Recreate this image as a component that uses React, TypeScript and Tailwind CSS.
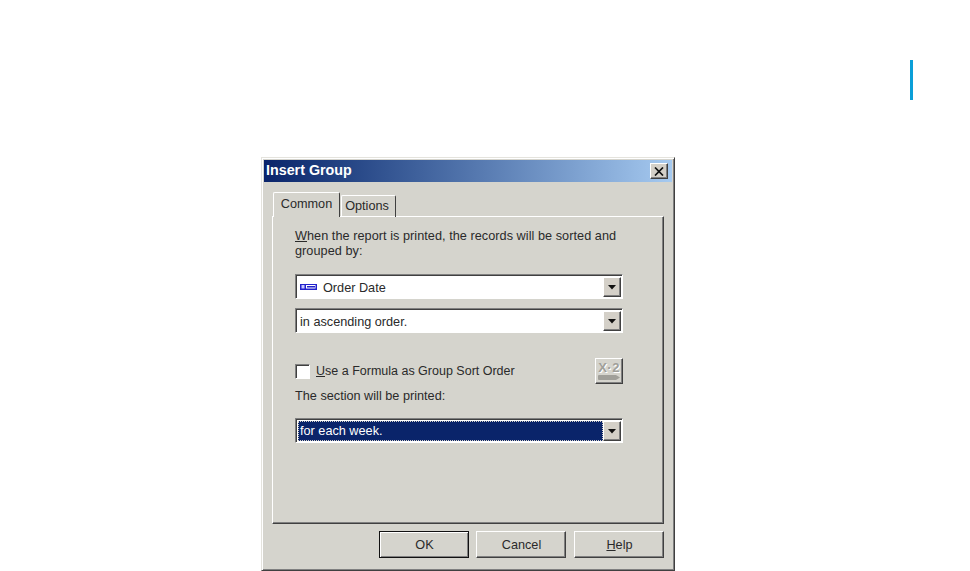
import React from 'react';

const raised = 'border border-t-white border-l-white border-r-[#404040] border-b-[#404040] shadow-[inset_-1px_-1px_0_#808080]';

const Combo: React.FC<{ children: React.ReactNode; selected?: boolean; className?: string }> = ({ children, selected, className }) => (
  <div className={`flex h-[25px] w-[328px] items-stretch border border-t-[#808080] border-l-[#808080] border-r-white border-b-white shadow-[inset_1px_1px_0_#404040] pt-[2px] pl-[2px] pb-px pr-px bg-white ${className ?? ''}`}>
    <div className={`flex min-w-0 flex-1 items-center ${selected ? 'bg-[#0a246a] text-white outline-1 -outline-offset-1 outline-dotted outline-[#d4d0c8]' : ''}`}>
      {children}
    </div>
    <div className={`flex w-[18px] items-center justify-center bg-[#d4d0c8] ${raised}`}>
      <svg width="8" height="5" viewBox="0 0 8 5"><path d="M0 0h8L4 4.5z" fill="#111" /></svg>
    </div>
  </div>
);

const Btn: React.FC<{ children: React.ReactNode; isDefault?: boolean; className?: string }> = ({ children, isDefault, className }) => (
  <div className={`flex h-[27px] w-[90px] items-center justify-center bg-[#d5d4cd] pt-[2px] pl-px ${isDefault ? 'border border-[#111] shadow-[inset_1px_1px_0_white,inset_-1px_-1px_0_#808080]' : raised} ${className ?? ''}`}>
    {children}
  </div>
);

export default function App() {
  return (
    <div className="flex h-[571px] w-[970px] flex-col overflow-hidden bg-white font-['Liberation_Sans',Arial,sans-serif] text-[12.7px] text-[#2a2a2a]">
      <div className="mt-[60px] ml-[910px] h-[40px] w-[3px] shrink-0 bg-[#0a9fd8]" />

      <div className="mt-[57px] ml-[261px] flex h-[414px] w-[414px] shrink-0 flex-col border border-t-[#e4e3dd] border-l-[#e4e3dd] border-r-[#404040] border-b-[#404040] bg-[#d5d4cd] p-[2px] shadow-[inset_1px_1px_0_white,inset_-1px_-1px_0_#808080]">
        <div className="flex h-[22px] shrink-0 items-center justify-between bg-gradient-to-r from-[#0a246a] to-[#a6caf0] pr-[4px] pl-[2px]">
          <span className="text-[14.3px] font-bold text-white">Insert Group</span>
          <div className={`flex h-[16px] w-[18px] items-center justify-center bg-[#d4d0c8] ${raised}`}>
            <svg width="10" height="9" viewBox="0 0 10 9"><path d="M1 0.5L9 8.5M9 0.5L1 8.5" stroke="#111" strokeWidth="1.7" /></svg>
          </div>
        </div>

        <div className="flex flex-1 flex-col px-[8px] pt-[10px]">
          <div className="z-10 -mb-px flex h-[25px] items-end pl-[1px]">
            <div className="flex h-[25px] w-[67px] items-center justify-center rounded-t-[2px] border border-b-0 border-t-white border-l-white border-r-[#404040] bg-[#d5d4cd]">Common</div>
            <div className="ml-px flex h-[22px] w-[55px] items-center justify-center rounded-t-[2px] border border-b-0 border-t-white border-l-white border-r-[#404040] pr-[3px]">Options</div>
          </div>

          <div className="flex h-[308px] w-[392px] flex-col border border-t-white border-l-white border-r-[#404040] border-b-[#404040] pt-[12px] pl-[22px] shadow-[inset_-1px_-1px_0_#808080]">
            <p className="w-[330px] leading-[15px] tracking-[0.04px]">
              <u>W</u>hen the report is printed, the records will be sorted and grouped by:
            </p>
            <Combo className="mt-[15px]">
              <svg className="mr-[6px] ml-[2px] -mt-px" width="17" height="6" viewBox="0 0 17 6">
                <rect x="0" y="0" width="17" height="6" fill="#2222cc" />
                <rect x="1.5" y="1" width="3" height="3.5" fill="#c8c8ff" />
                <rect x="6" y="1" width="9.5" height="3.5" fill="#fff" />
                <rect x="7" y="2" width="8" height="1.5" fill="#2222cc" />
              </svg>
              <span className="pt-[3px]">Order Date</span>
            </Combo>
            <Combo className="mt-[9px]"><span className="pl-[2px] pt-[3px]">in ascending order.</span></Combo>

            <div className="mt-[25px] flex h-[26px] w-[328px] items-center">
              <div className="size-[15px] border border-t-[#808080] border-l-[#808080] border-r-white border-b-white bg-white shadow-[inset_1px_1px_0_#404040]" />
              <span className="ml-[6px] flex-1 text-[12.5px]"><u>U</u>se a Formula as Group Sort Order</span>
              <div className={`flex h-[26px] w-[28px] flex-col items-center justify-center bg-[#d5d4cd] ${raised}`}>
                <span className="text-[13px] leading-[12px] font-bold tracking-[0.5px] text-[#a09f99] [text-shadow:1px_1px_0_#fff]">X·2</span>
                <svg className="mt-px" width="22" height="5" viewBox="0 0 22 5"><path d="M1 0h17l4 2.5-4 2.5H1a1 1 0 01-1-1V1a1 1 0 011-1z" fill="#a09f99" /></svg>
              </div>
            </div>

            <p className="mt-[5px] leading-[15px]">The section will be printed:</p>
            <Combo selected className="mt-[14px]"><span className="pl-[2px] pt-[2px]">for each week.</span></Combo>
          </div>

          <div className="mt-[7px] flex justify-end gap-[7px]">
            <Btn isDefault>OK</Btn>
            <Btn>Cancel</Btn>
            <Btn className="ml-px"><span><u>H</u>elp</span></Btn>
          </div>
        </div>
      </div>
    </div>
  );
}
